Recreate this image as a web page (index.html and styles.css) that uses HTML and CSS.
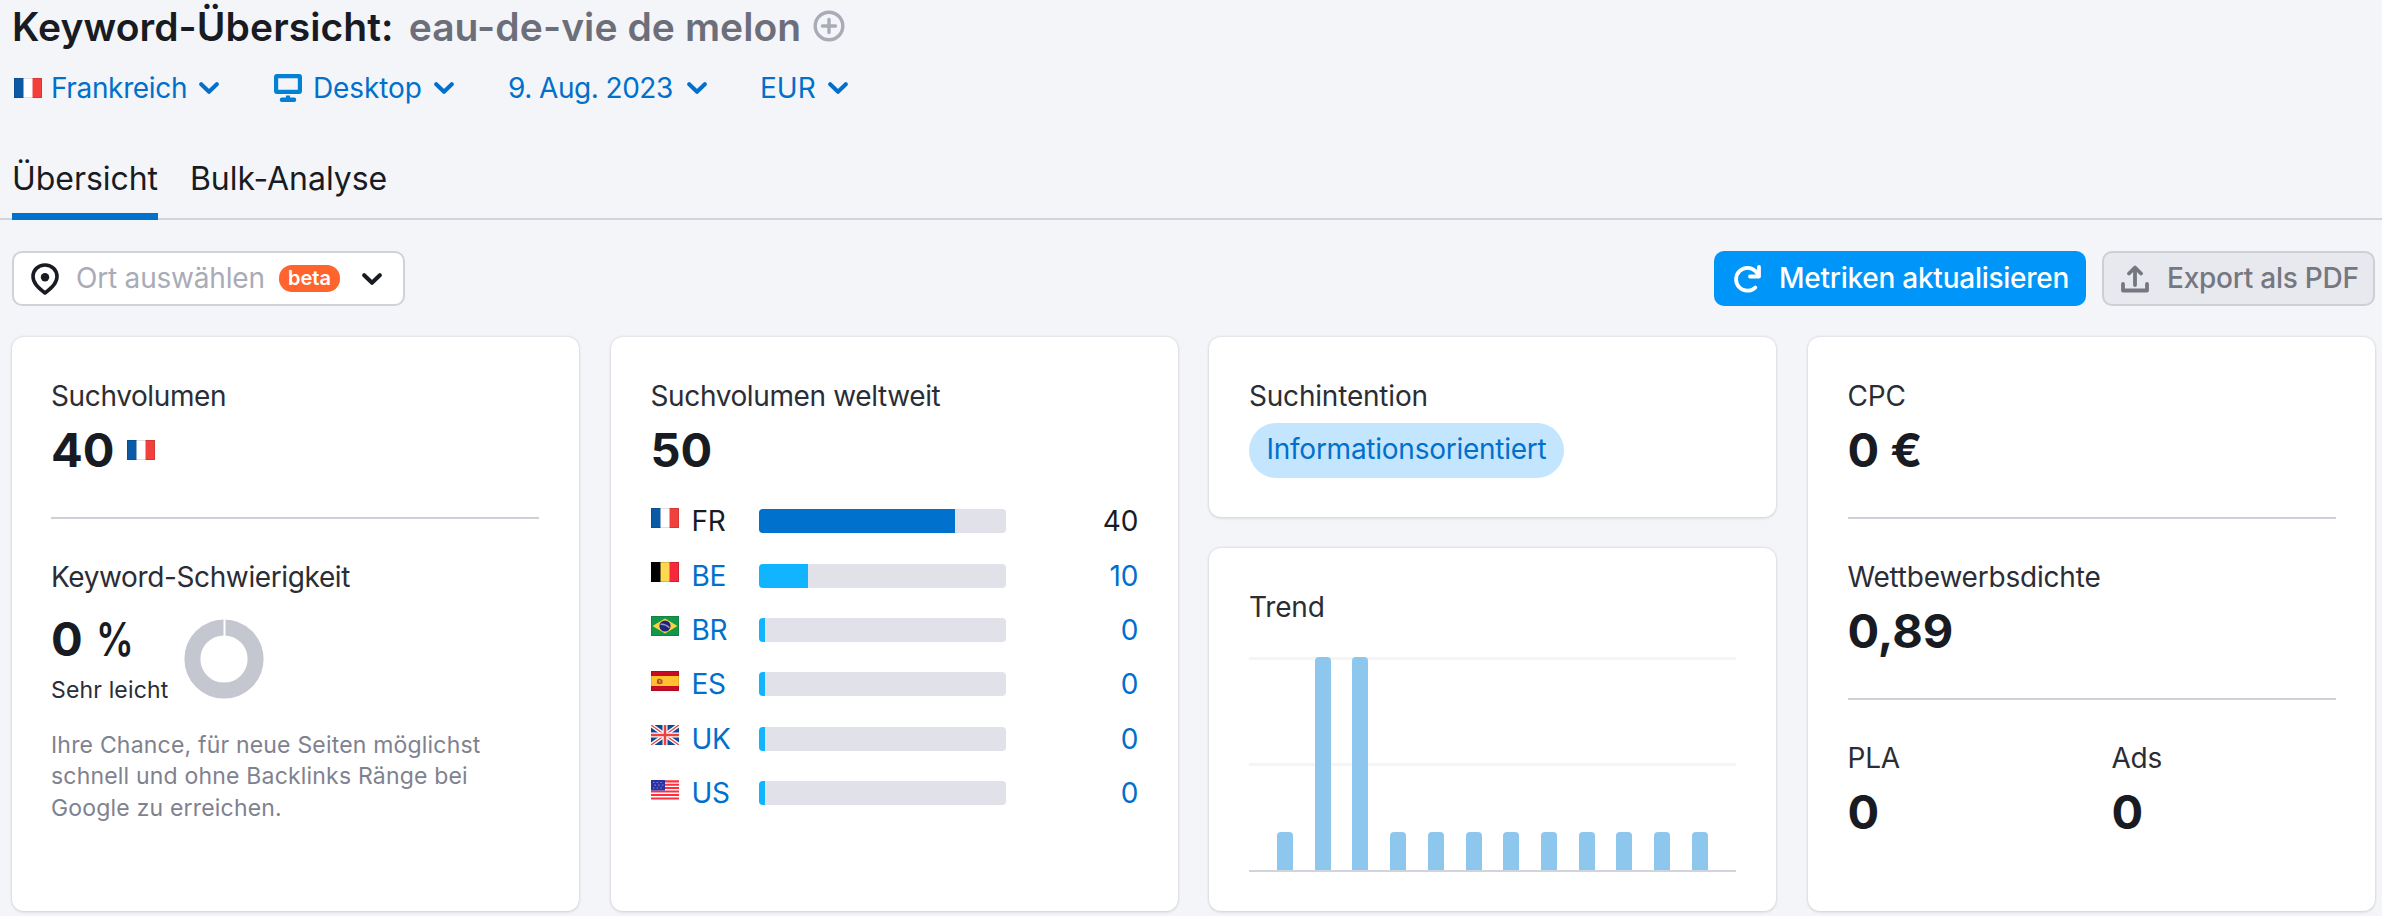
FILE: index.html
```html
<!DOCTYPE html>
<html lang="de">
<head>
<meta charset="utf-8">
<title>Keyword-Übersicht</title>
<link rel="stylesheet" href="styles.css">
</head>
<body>
<svg class="defs" width="0" height="0" aria-hidden="true">
  <symbol id="flag-fr" viewBox="0 0 28 20"><path fill="#fff" d="M0 0h28v20H0z"/><path fill="#0b5aa5" d="M0 0h9.500v20H0z"/><path fill="#f2403c" d="M18.500 0H28v20h-9.500z"/><path d="M.5.5h27v19H.5z" fill="none" stroke="#000" stroke-opacity=".12"/></symbol>
  <symbol id="flag-be" viewBox="0 0 28 20"><path fill="#fdd950" d="M0 0h28v20H0z"/><path d="M0 0h9.500v20H0z"/><path fill="#f6283a" d="M18.500 0H28v20h-9.500z"/><path d="M.5.5h27v19H.5z" fill="none" stroke="#000" stroke-opacity=".15"/></symbol>
  <symbol id="flag-br" viewBox="0 0 28 20"><path fill="#12964a" d="M0 0h28v20H0z"/><path fill="#fbd43d" d="M14 2.500 26.500 10 14 17.500 1.500 10z"/><circle cx="14" cy="10" r="5.600" fill="#21237c"/><path d="M9.500 8.300q5-.5 9 3.400" fill="none" stroke="#8f9ac0" stroke-width="1.300"/><path d="M.5.5h27v19H.5z" fill="none" stroke="#000" stroke-opacity=".12"/></symbol>
  <symbol id="flag-es" viewBox="0 0 28 20"><path fill="#c60b23" d="M0 0h28v20H0z"/><path fill="#ffc12d" d="M0 5h28v10H0z"/><path fill="#b0502a" d="M6 8.500 8.500 7.500l3 1.500v3.500l-3 .8-2.700-.8z"/><path d="M8 9h1.500v2.500H8z" fill="#e0a03a"/><path d="M.5.5h27v19H.5z" fill="none" stroke="#000" stroke-opacity=".12"/></symbol>
  <symbol id="flag-uk" viewBox="0 0 28 20"><path fill="#0d4a94" d="M0 0h28v20H0z"/><path d="m0 0 28 20M28 0 0 20" stroke="#fff" stroke-width="4"/><path d="m0 0 28 20M28 0 0 20" stroke="#e5454b" stroke-width="1.300"/><path d="M14 0v20M0 10h28" stroke="#fff" stroke-width="5"/><path d="M14 0v20M0 10h28" stroke="#ee3f43" stroke-width="2.600"/></symbol>
  <symbol id="flag-us" viewBox="0 0 28 20"><path fill="#fff" d="M0 0h28v20H0z"/><path d="M0 1.400h28M0 4.700h28M0 8h28M0 11.500h28M0 15h28M0 18.500h28" stroke="#ff2e3e" stroke-width="2.100"/><path fill="#2b31a3" d="M0 0h14v10.500H0z"/><path d="M2 2.500h11M3.500 5.200h9M2 8h11" stroke="#8085cf" stroke-width="1.200" stroke-dasharray="1.500 2.200"/></symbol>
  <symbol id="chevron" viewBox="0 0 20 12"><path d="m2.200 2.200 7.800 7.600 7.800-7.600" fill="none" stroke="currentColor" stroke-width="4" stroke-linecap="round" stroke-linejoin="round"/></symbol>
</svg>

<header class="title">
  <h1>Keyword-Übersicht:</h1>
  <span class="keyword">eau-de-vie de melon</span>
  <svg class="add" viewBox="0 0 32 32"><circle cx="16" cy="16" r="13.800"/><path d="M16 9.500v13M9.500 16h13"/></svg>
</header>

<nav class="filters">
  <a class="filter f-country"><svg class="flag"><use href="#flag-fr"/></svg><span>Frankreich</span><svg class="chev"><use href="#chevron"/></svg></a>
  <a class="filter f-device"><svg class="desktop" viewBox="0 0 28 28"><path fill-rule="evenodd" d="M3 0h22a3 3 0 0 1 3 3v14a3 3 0 0 1-3 3H3a3 3 0 0 1-3-3V3a3 3 0 0 1 3-3zm1.200 4.200v11.600h19.600V4.200z"/><path d="M12 21.500h4v2h4a2 2 0 0 1 0 4.500H8a2 2 0 0 1 0-4.500h4z"/></svg><span>Desktop</span><svg class="chev"><use href="#chevron"/></svg></a>
  <a class="filter f-date"><span>9. Aug. 2023</span><svg class="chev"><use href="#chevron"/></svg></a>
  <a class="filter f-currency"><span>EUR</span><svg class="chev"><use href="#chevron"/></svg></a>
</nav>

<nav class="tabs">
  <a class="tab active">Übersicht</a>
  <a class="tab">Bulk-Analyse</a>
</nav>

<div class="toolbar">
  <button class="select">
    <svg class="pin" viewBox="0 0 28 32"><path d="M14 2C7 2 2 7.200 2 13.500 2 20 7 24.500 14 30c7-5.500 12-10 12-16.500C26 7.200 21 2 14 2z" fill="none" stroke="currentColor" stroke-width="3.600" stroke-linejoin="round"/><circle cx="14" cy="14.300" r="4.200" fill="currentColor"/></svg>
    <span class="placeholder">Ort auswählen</span>
    <span class="beta">beta</span>
    <svg class="chev"><use href="#chevron"/></svg>
  </button>
  <div class="actions">
    <button class="btn primary">
      <svg viewBox="0 0 28 28"><path d="M22.300 22.600A11.400 11.400 0 1 1 22.500 6.200L25 9" fill="none" stroke="currentColor" stroke-width="3.800" stroke-linecap="round"/><path d="M26 2v9.500h-9" fill="none" stroke="currentColor" stroke-width="3.800" stroke-linecap="round" stroke-linejoin="round"/></svg>
      <span>Metriken aktualisieren</span>
    </button>
    <button class="btn secondary">
      <svg viewBox="0 0 28 28"><path d="M2 19v6.500h24V19M14 20V3M8 8.500 14 2.500l6 6" fill="none" stroke="currentColor" stroke-width="3.800" stroke-linecap="round" stroke-linejoin="round"/></svg>
      <span>Export als PDF</span>
    </button>
  </div>
</div>

<main class="grid">
  <section class="card volume">
    <h2 class="label">Suchvolumen</h2>
    <div class="value">40 <svg class="flag"><use href="#flag-fr"/></svg></div>
    <hr>
    <h2 class="label">Keyword-Schwierigkeit</h2>
    <div class="difficulty">
      <div class="score">
        <div class="value">0<span class="percent">%</span></div>
        <div class="rating">Sehr leicht</div>
      </div>
      <svg class="donut" viewBox="0 0 80 80"><circle cx="40" cy="40" r="31.600"/><path d="M40.500 0v17"/></svg>
    </div>
    <p class="hint">Ihre Chance, für neue Seiten möglichst schnell und ohne Backlinks Ränge bei Google zu erreichen.</p>
  </section>

  <section class="card world">
    <h2 class="label">Suchvolumen weltweit</h2>
    <div class="value">50</div>
    <ul class="countries">
      <li class="current"><svg class="flag"><use href="#flag-fr"/></svg><span>FR</span><div class="bar"><i style="width:79.700%"></i></div><b>40</b></li>
      <li><svg class="flag"><use href="#flag-be"/></svg><span>BE</span><div class="bar"><i style="width:19.900%"></i></div><b>10</b></li>
      <li><svg class="flag"><use href="#flag-br"/></svg><span>BR</span><div class="bar"><i style="width:2.700%"></i></div><b>0</b></li>
      <li><svg class="flag"><use href="#flag-es"/></svg><span>ES</span><div class="bar"><i style="width:2.700%"></i></div><b>0</b></li>
      <li><svg class="flag"><use href="#flag-uk"/></svg><span>UK</span><div class="bar"><i style="width:2.700%"></i></div><b>0</b></li>
      <li><svg class="flag"><use href="#flag-us"/></svg><span>US</span><div class="bar"><i style="width:2.700%"></i></div><b>0</b></li>
    </ul>
  </section>

  <div class="stack">
    <section class="card intent">
      <h2 class="label">Suchintention</h2>
      <span class="pill">Informationsorientiert</span>
    </section>
    <section class="card trend">
      <h2 class="label">Trend</h2>
      <div class="chart">
        <i></i><i style="height:100%"></i><i style="height:100%"></i><i></i><i></i><i></i><i></i><i></i><i></i><i></i><i></i><i></i>
      </div>
    </section>
  </div>

  <section class="card">
    <h2 class="label">CPC</h2>
    <div class="value">0 €</div>
    <hr>
    <h2 class="label">Wettbewerbsdichte</h2>
    <div class="value">0,89</div>
    <hr>
    <div class="pair">
      <div><h2 class="label">PLA</h2><div class="value">0</div></div>
      <div><h2 class="label">Ads</h2><div class="value">0</div></div>
    </div>
  </section>
</main>
</body>
</html>
```
FILE: styles.css
```css
* { box-sizing: border-box; margin: 0; padding: 0; }
body {
  width: 2382px; height: 916px; overflow: hidden;
  background: #f4f5f9; color: #191b23;
  font-family: Inter, "Liberation Sans", sans-serif; font-size: 28px;
}
.defs { display: block; height: 0; }
svg { display: block; flex: none; }
button { font: inherit; }
.flag { width: 28px; height: 20px; }
.chev { width: 20px; height: 12px; }

.title { display: flex; align-items: center; height: 52px; padding-left: 12px; font-size: 39px; letter-spacing: .08px; font-weight: 600; white-space: nowrap; }
.title h1 { font-size: inherit; font-weight: inherit; }
.keyword { margin-left: 15px; color: #6c6e79; }
.add { width: 32px; height: 32px; margin-left: 12px; fill: none; stroke: #a9abb6; stroke-width: 3.4; stroke-linecap: round; }

.filters { display: flex; align-items: center; height: 72px; padding-left: 14px; color: #0070cc; }
.filter { display: flex; align-items: center; white-space: nowrap; }
.filter .chev { margin-left: 12px; }
.f-country { width: 260px; }
.f-country span { margin-left: 9px; letter-spacing: -.35px; }
.f-device { width: 234px; }
.f-device span { margin-left: 11px; letter-spacing: -.1px; }
.f-date { width: 252px; }
.f-date span { letter-spacing: -.5px; }
.f-date .chev { margin-left: 14px; }
.desktop { width: 28px; height: 28px; fill: #0080d6; }

.tabs { display: flex; gap: 32px; height: 96px; padding: 0 12px; border-bottom: 2px solid #d1d4db; }
.tab { height: 96px; padding-top: 36px; line-height: 38px; font-size: 32px; letter-spacing: -.05px; white-space: nowrap; }
.tab.active { border-bottom: 7px solid #0071cd; }

.toolbar { display: flex; justify-content: space-between; padding: 31px 7px 0 12px; }
.select { display: flex; align-items: center; width: 393px; height: 55px; padding-left: 17px; background: #fff; border: 2px solid #d0d2da; border-radius: 10px; color: #191b23; }
.pin { width: 28px; height: 32px; }
.placeholder { width: 187px; margin: 0 0 2px 17px; color: #a9abb6; letter-spacing: -.2px; text-align: left; white-space: nowrap; }
.beta { width: 61px; height: 27px; margin-left: 16px; border-radius: 13px; background: #ff642d; color: #fff; font-size: 20px; line-height: 26px; font-weight: 600; text-align: center; }
.select .chev { margin-left: 22px; }
.actions { display: flex; gap: 16px; }
.btn { display: flex; align-items: center; height: 55px; border: 0; border-radius: 10px; font-weight: 500; white-space: nowrap; }
.btn svg { width: 28px; height: 28px; }
.btn span { margin: 0 0 2px 18px; letter-spacing: -.25px; }
.primary { width: 372px; padding-left: 19px; background: #0095f8; color: #fff; }
.secondary { width: 273px; padding-left: 17px; background: #e8e9ee; border: 2px solid #cdcfd6; color: #757781; }

.grid { display: grid; grid-template-columns: repeat(4, 567px); column-gap: 31.5px; padding: 31px 0 0 12px; }
.card { height: 574px; padding: 39px 39px 0 40px; background: #fff; border-radius: 12px; box-shadow: 0 0 2px 1px rgba(25, 27, 35, .09), 0 2px 3px rgba(25, 27, 35, .06); }
.label { height: 40px; line-height: 40px; font-size: 28px; font-weight: 400; letter-spacing: -.2px; color: #2b2d35; white-space: nowrap; }
.volume .label, .world .label { letter-spacing: -.38px; }
.volume { padding-left: 39px; padding-right: 40px; }
.value { display: flex; align-items: center; gap: 13px; height: 68px; font-size: 47px; line-height: 68px; font-weight: 700; white-space: nowrap; }
hr { height: 2px; margin: 33px 0 38px; border: 0; background: #cdd0d7; }

.difficulty { display: flex; height: 101px; }
.score { width: 133px; }
.difficulty .value { height: 83px; line-height: 83px; }
.percent { display: block; font-weight: 600; transform: scaleX(.8); transform-origin: left; }
.rating { height: 20px; line-height: 20px; font-size: 23px; letter-spacing: .15px; color: #2b2d35; white-space: nowrap; }
.donut { width: 80px; height: 80px; margin: 22px 0 0; fill: none; stroke: #c4c7cf; stroke-width: 16; }
.donut path { stroke: #fff; stroke-width: 2; }
.hint { width: 450px; margin-top: 32px; font-size: 23px; letter-spacing: .19px; line-height: 31.4px; color: #7f828e; }

.countries { list-style: none; padding-top: 10px; }
.countries li { display: flex; align-items: center; height: 54.4px; color: #0070cc; }
.countries .flag { margin-bottom: 7px; }
.countries span { width: 67px; margin-left: 13px; letter-spacing: -.3px; }
.bar { width: 247px; height: 24px; border-radius: 4px; background: #e0e1e9; overflow: hidden; }
.bar i { display: block; height: 100%; background: #11b5ff; }
.countries b { flex: 1; text-align: right; font-weight: 400; }
.current .bar i { background: #0071cd; }
.countries .current { color: #191b23; }

.stack { display: flex; flex-direction: column; gap: 31px; }
.intent { height: 180px; }
.trend { height: 363px; padding-right: 40px; }
.pill { display: block; width: 315px; height: 55px; margin-top: 7px; border-radius: 28px; background: #c4e5fe; color: #0070cc; line-height: 53px; letter-spacing: -.25px; text-align: center; }
.chart {
  display: flex; align-items: flex-end; justify-content: space-between; height: 215px; margin-top: 30px; padding: 0 28px;
  border-bottom: 2px solid #d1d4db;
  background: linear-gradient(#f4f5f6, #f4f5f6) 0 0 / 100% 3px no-repeat, linear-gradient(#f4f5f6, #f4f5f6) 0 106px / 100% 3px no-repeat;
}
.chart i { width: 16px; height: 38px; border-radius: 4px 4px 0 0; background: #8ec7ed; }

.pair { display: grid; grid-template-columns: 264px 1fr; }
```
